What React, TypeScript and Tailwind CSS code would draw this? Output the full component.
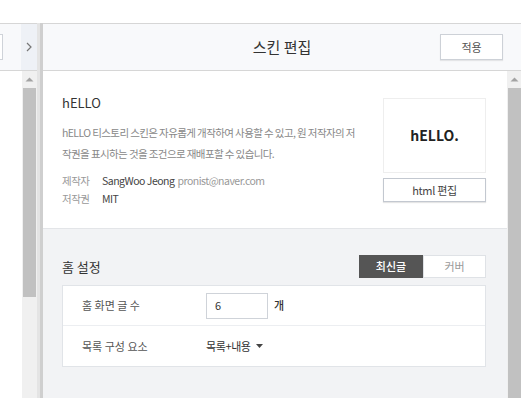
import React from "react";

const font = { fontFamily: '"Noto Sans CJK KR", "Noto Sans", sans-serif' };

function UpArrow() {
  return (
    <svg width="9" height="5" viewBox="0 0 9 5" className="block">
      <path d="M0.5 4.5 L4.5 0.5 L8.5 4.5 Z" fill="#a3a3a3" />
    </svg>
  );
}

export default function App() {
  return (
    <div className="w-[521px] h-[398px] overflow-hidden bg-white flex flex-col text-[#333]" style={font}>
      <div className="h-[23px] shrink-0 bg-white" />
      <div className="flex flex-1 min-h-0">
        {/* left pane */}
        <div className="w-[37px] shrink-0 flex flex-col">
          <div className="h-[48px] shrink-0 border-t border-b border-[#d6d6d6] bg-[#f8f9fb] flex">
            <div className="w-[21px] flex items-center">
              <div className="w-[3px] h-[26px] bg-white border border-l-0 border-[#cfd3d9]" />
            </div>
            <div className="w-[16px] bg-[#eef1f6] flex items-center justify-center">
              <svg width="6" height="10" viewBox="0 0 6 10">
                <path d="M1 1 L5 5 L1 9" stroke="#777" strokeWidth="1.2" fill="none" />
              </svg>
            </div>
          </div>
          <div className="flex flex-1 min-h-0">
            <div className="w-[22px] bg-white" />
            <div className="w-[15px] bg-[#f0f0f0] flex flex-col items-center">
              <div className="h-[17px] flex items-center justify-center"><UpArrow /></div>
              <div className="w-[13px] h-[209px] bg-[#c1c1c1]" />
            </div>
          </div>
        </div>
        {/* divider */}
        <div className="w-[3px] shrink-0 bg-[#e4e4e4]" />
        <div className="w-[3px] shrink-0 bg-[#cfcfcf]" />
        {/* right pane */}
        <div className="flex-1 flex flex-col min-w-0">
          <div className="h-[48px] shrink-0 border-t border-b border-[#d6d6d6] bg-[#f8f9fb] relative flex items-center justify-center">
            <span className="text-[15px] text-[#333]">스킨 편집</span>
            <button className="absolute right-[18px] top-[10px] w-[63px] h-[26px] bg-white border border-[#cdd1d7] shadow-[0_1px_1px_rgba(0,0,0,0.08)] text-[11px] text-[#555]">
              적용
            </button>
          </div>
          <div className="flex flex-1 min-h-0">
            <div className="flex-1 flex flex-col bg-[#f2f3f5]">
              <div className="h-[158px] shrink-0 bg-white border-b border-[#e3e5e8] flex pl-[19px] pr-[21px]">
                <div className="flex-1 pt-[23px]">
                  <div className="text-[13px] leading-[18px] text-[#333]">hELLO</div>
                  <div className="mt-[10px] text-[10.5px] leading-[21px] text-[#888] whitespace-nowrap tracking-[-0.6px]">
                    hELLO 티스토리 스킨은 자유롭게 개작하여 사용할 수 있고, 원 저작자의 저<br />
                    작권을 표시하는 것을 조건으로 재배포할 수 있습니다.
                  </div>
                  <div className="mt-[8px] flex flex-col text-[10.5px] leading-[18px] tracking-[-0.5px]">
                    <div className="flex">
                      <span className="w-[40px] text-[#999]">제작자</span>
                      <span className="text-[#444]">SangWoo Jeong</span>
                      <span className="ml-[3px] text-[#999]">pronist@naver.com</span>
                    </div>
                    <div className="flex">
                      <span className="w-[40px] text-[#999]">저작권</span>
                      <span className="text-[#444]">MIT</span>
                    </div>
                  </div>
                </div>
                <div className="w-[103px] pt-[27px] flex flex-col">
                  <div className="h-[75px] border border-[#eeeeee] flex items-center justify-center text-[14px] font-bold text-[#222]">
                    hELLO.
                  </div>
                  <button className="mt-[5px] h-[24px] bg-white border border-[#c3c8d0] shadow-[0_1px_1px_rgba(0,0,0,0.1)] text-[11px] text-[#444] tracking-[-0.3px]">
                    html 편집
                  </button>
                </div>
              </div>
              <div className="pl-[19px] pr-[21px] pt-[26px]">
                <div className="flex items-center justify-between h-[23px]">
                  <span className="text-[13px] text-[#333]">홈 설정</span>
                  <div className="flex h-[23px]">
                    <div className="w-[64px] bg-[#555555] text-white text-[11px] font-medium flex items-center justify-center">최신글</div>
                    <div className="w-[63px] bg-white border border-[#dfe2e6] text-[#999] text-[11px] flex items-center justify-center">커버</div>
                  </div>
                </div>
                <div className="mt-[7px] bg-white border border-[#e1e4e8] text-[11px]">
                  <div className="h-[40px] flex items-center border-b border-[#eceef1]">
                    <span className="w-[143px] pl-[19px] text-[#555]">홈 화면 글 수</span>
                    <div className="w-[62px] h-[26px] border border-[#cfd3d9] flex items-center pl-[8px] text-[#333]">6</div>
                    <span className="ml-[6px] text-[#333] font-medium">개</span>
                  </div>
                  <div className="h-[40px] flex items-center">
                    <span className="w-[143px] pl-[19px] text-[#555]">목록 구성 요소</span>
                    <span className="text-[#333] tracking-[-0.4px]">목록+내용</span>
                    <svg width="7" height="4" viewBox="0 0 7 4" className="ml-[5px]">
                      <path d="M0 0 L7 0 L3.5 4 Z" fill="#444" />
                    </svg>
                  </div>
                </div>
              </div>
            </div>
            <div className="w-[14px] shrink-0 bg-[#f0f0f0] flex flex-col items-center">
              <div className="h-[17px] flex items-center justify-center"><UpArrow /></div>
              <div className="w-[13px] flex-1 bg-[#c1c1c1]" />
            </div>
          </div>
        </div>
      </div>
    </div>
  );
}
